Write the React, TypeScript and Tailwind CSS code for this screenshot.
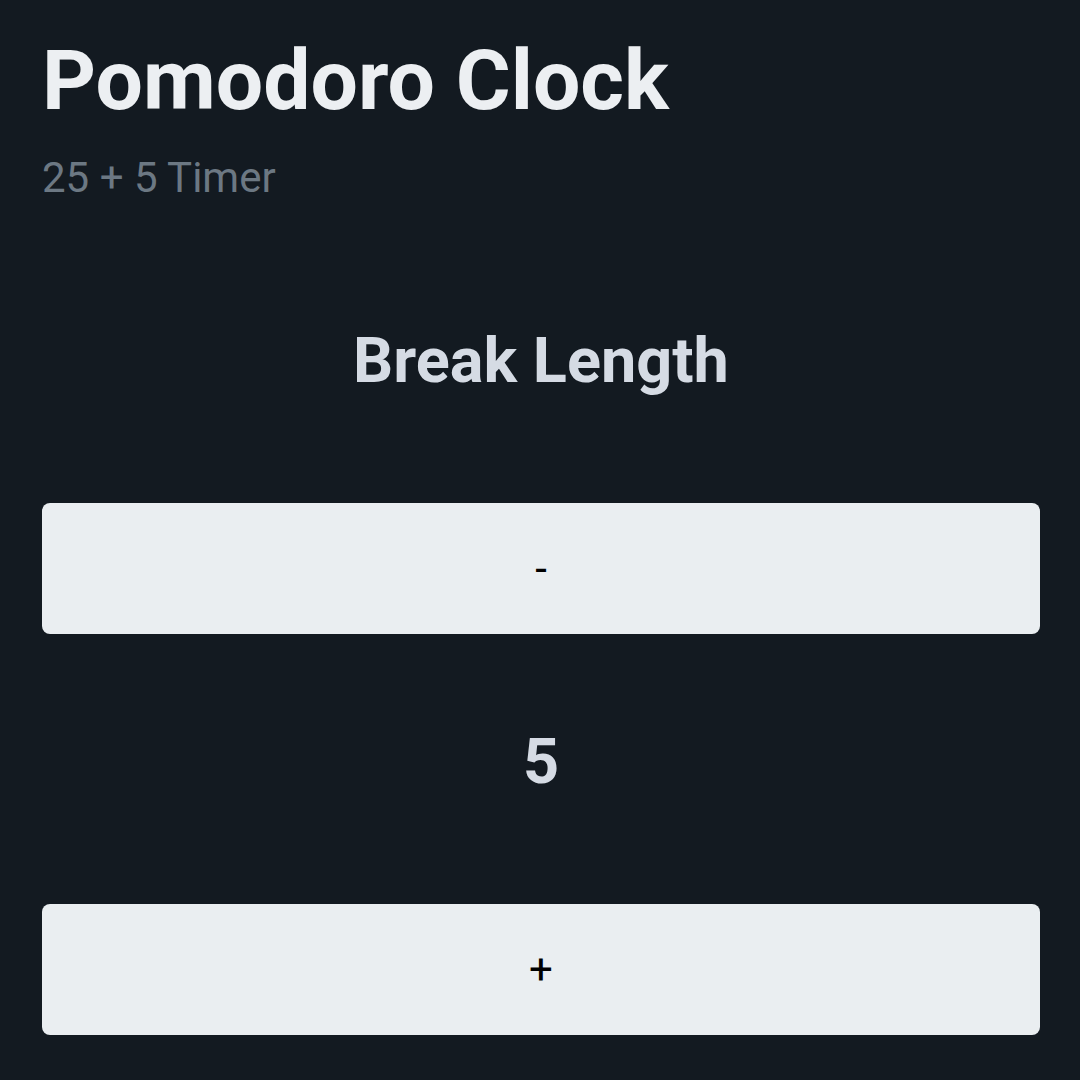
import React from "react";

const Stepper = ({ label }: { label: string }) => (
  <button
    type="button"
    className="flex h-[131px] w-full items-center justify-center rounded-lg bg-[#eaeef1] text-[42px] leading-none text-black"
  >
    {label}
  </button>
);

const App = () => {
  return (
    <div className="min-h-screen bg-[#131a21] pl-[42px] pr-[40px] pt-[39px] font-['Roboto',sans-serif]">
      {/* header */}
      <h1 className="text-[84px] font-bold leading-[84px] text-[#eceff2]">
        Pomodoro Clock
      </h1>
      <p className="mt-[34px] text-[42px] leading-[42px] text-[#6c7883]">
        25 + 5 Timer
      </p>

      {/* break control */}
      <div className="mt-[130px] flex flex-col items-center">
        <h2 className="text-[63px] font-bold leading-[63px] text-[#d5dbe4]">
          Break Length
        </h2>
        <div className="mt-[111px] w-full">
          <Stepper label="-" />
        </div>
        <div className="mt-[96px] text-[63px] font-bold leading-[63px] text-[#d5dbe4]">
          5
        </div>
        <div className="mt-[111px] w-full">
          <Stepper label="+" />
        </div>
      </div>
    </div>
  );
};

export default App;
